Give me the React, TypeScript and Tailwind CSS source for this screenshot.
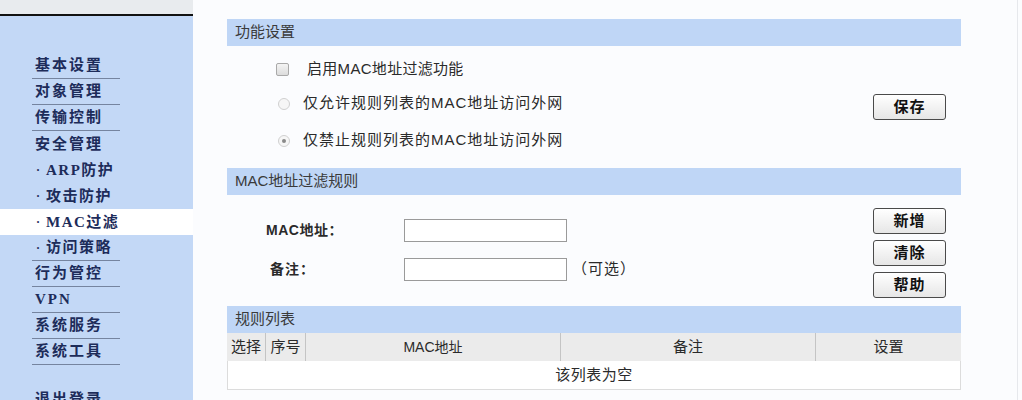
import React from 'react';

const serif = { fontFamily: '"Liberation Serif", "Noto Sans CJK SC", serif' };
const sans = { fontFamily: '"Liberation Sans", "Noto Sans CJK SC", sans-serif' };

interface NavItem {
  label: string;
  sub?: boolean;
  line?: boolean;
  active?: boolean;
}

const navItems: NavItem[] = [
  { label: '基本设置', line: true },
  { label: '对象管理', line: true },
  { label: '传输控制', line: true },
  { label: '安全管理' },
  { label: 'ARP防护', sub: true },
  { label: '攻击防护', sub: true },
  { label: 'MAC过滤', sub: true, active: true },
  { label: '访问策略', sub: true, line: true },
  { label: '行为管控', line: true },
  { label: 'VPN', line: true },
  { label: '系统服务', line: true },
  { label: '系统工具', line: true },
];

const SectionBar: React.FC<{ title: string }> = ({ title }) => (
  <div className="h-[27px] bg-[#bfd6f6] flex items-center pl-[8px] text-[15px] text-[#3a3a3a]">
    {title}
  </div>
);

const Button: React.FC<{ label: string }> = ({ label }) => (
  <button className="w-[73px] h-[26px] rounded-[3px] border-[1.5px] border-[#4a4a4a] bg-gradient-to-b from-white to-[#e6e6e6] text-[15px] font-bold text-[#111] tracking-[1px] flex items-center justify-center">
    {label}
  </button>
);

const Sidebar: React.FC = () => (
  <div className="w-[193px] h-[400px] shrink-0 overflow-hidden bg-[#c3d8f6] flex flex-col" style={serif}>
    <div className="h-[14px] shrink-0 bg-[#e8ebee]" />
    <div className="h-[2px] shrink-0 bg-[#111]" />
    <div className="pt-[37px] shrink-0 flex flex-col font-bold text-[15px] text-[#1d2c5a]">
      {navItems.map((item) => (
        <div key={item.label} className={`h-[26px] shrink-0 pl-[32px] ${item.active ? 'bg-white' : ''}`}>
          <div
            className={`w-[88px] h-[26px] flex items-center tracking-[2px] ${
              item.line ? 'border-b border-[#75849f]' : ''
            } ${item.sub ? 'pl-[4px]' : 'pl-[3px]'}`}
          >
            {item.sub ? (
              <>
                <span className="mr-[4px] text-[12px]">·</span>
                <span className="tracking-[1.5px]">{item.label}</span>
              </>
            ) : (
              item.label
            )}
          </div>
        </div>
      ))}
      <div className="h-[21px] shrink-0" />
      <div className="h-[26px] shrink-0 pl-[35px] flex items-center tracking-[2px]">退出登录</div>
    </div>
  </div>
);

export default function App() {
  return (
    <div className="w-[1022px] h-[400px] overflow-hidden flex bg-[#fbfcfe]">
      <Sidebar />
      <div className="flex-1 flex" style={sans}>
        <div className="w-[768px] pl-[34px] pt-[19px] text-[#2a2a2a]">
          {/* 功能设置 */}
          <SectionBar title="功能设置" />
          <div className="flex">
            <div className="flex-1 flex flex-col">
              <div className="h-[31px] mt-[8px] flex items-center pl-[49px]">
                <span className="w-[13px] h-[13px] rounded-[2px] border border-[#a9a9a9] bg-gradient-to-b from-[#f4f4f4] to-[#dcdcdc]" />
                <span className="ml-[18px] text-[15px] tracking-[0.3px]">启用MAC地址过滤功能</span>
              </div>
              <div className="h-[37px] flex items-center pl-[51px]">
                <span className="w-[12px] h-[12px] rounded-full border border-[#d0d0d0] bg-[#f6f6f6]" />
                <span className="ml-[13px] text-[15px] tracking-[1px]">仅允许规则列表的MAC地址访问外网</span>
              </div>
              <div className="h-[37px] flex items-center pl-[51px]">
                <span className="w-[12px] h-[12px] rounded-full border border-[#d0d0d0] bg-[#f6f6f6] flex items-center justify-center">
                  <span className="w-[4px] h-[4px] rounded-full bg-[#8a8a8a]" />
                </span>
                <span className="ml-[13px] text-[15px] tracking-[1px]">仅禁止规则列表的MAC地址访问外网</span>
              </div>
            </div>
            <div className="w-[88px] pt-[48px]">
              <Button label="保存" />
            </div>
          </div>

          {/* MAC地址过滤规则 */}
          <div className="mt-[9px]">
            <SectionBar title="MAC地址过滤规则" />
          </div>
          <div className="flex h-[111px]">
            <div className="flex-1 flex flex-col pt-[24px] text-[14px] font-bold">
              <div className="h-[22px] flex items-center">
                <span className="w-[177px] pl-[39px] tracking-[0.5px]">MAC地址：</span>
                <span className="w-[163px] h-[23px] border border-[#9a9a9a] bg-white" />
              </div>
              <div className="h-[22px] mt-[17px] flex items-center">
                <span className="w-[177px] pl-[43px] tracking-[1px]">备注：</span>
                <span className="w-[163px] h-[23px] border border-[#9a9a9a] bg-white" />
                <span className="ml-[5px] font-normal text-[15px] tracking-[1px]">（可选）</span>
              </div>
            </div>
            <div className="w-[88px] pt-[13px] flex flex-col gap-[6px]">
              <Button label="新增" />
              <Button label="清除" />
              <Button label="帮助" />
            </div>
          </div>

          {/* 规则列表 */}
          <div className="w-[734px]">
            <SectionBar title="规则列表" />
            <div className="grid grid-cols-[39px_40px_255px_255px_145px] h-[28px] bg-[#ebebeb] text-[15px]">
              <div className="flex items-center justify-center border-r border-[#c4c4c4]">选择</div>
              <div className="flex items-center justify-center border-r border-[#c4c4c4]">序号</div>
              <div className="flex items-center justify-center border-r border-[#c4c4c4] text-[14px]">MAC地址</div>
              <div className="flex items-center justify-center border-r border-[#c4c4c4]">备注</div>
              <div className="flex items-center justify-center">设置</div>
            </div>
            <div className="h-[29px] bg-white border border-t-0 border-[#dcdcdc] flex items-center justify-center text-[15px] tracking-[0.5px]">
              该列表为空
            </div>
          </div>
        </div>
        <div className="flex-1" />
        <div className="w-[1px] bg-[#e6e8ec] mr-[4px]" />
      </div>
    </div>
  );
}
